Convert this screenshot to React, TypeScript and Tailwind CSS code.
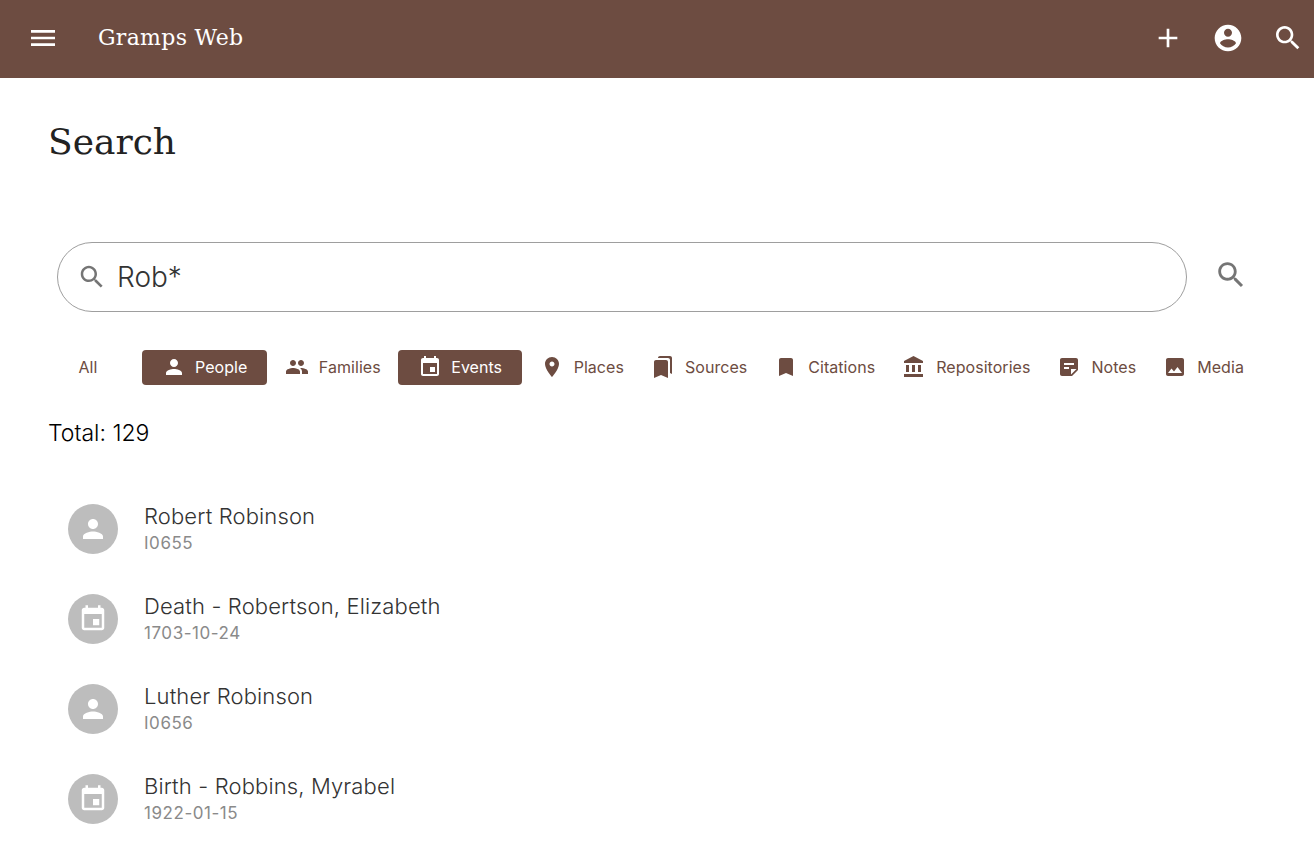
type IconProps = { d: string; className?: string };

const P = {
  menu: "M3 18h18v-2H3v2zm0-5h18v-2H3v2zm0-7v2h18V6H3z",
  plus: "M19 13h-6v6h-2v-6H5v-2h6V5h2v6h6v2z",
  account:
    "M12 2C6.48 2 2 6.48 2 12s4.48 10 10 10 10-4.48 10-10S17.52 2 12 2zm0 3c1.66 0 3 1.34 3 3s-1.34 3-3 3-3-1.34-3-3 1.34-3 3-3zm0 14.2c-2.5 0-4.71-1.28-6-3.22.03-1.99 4-3.08 6-3.08 1.99 0 5.97 1.09 6 3.08-1.29 1.94-3.5 3.22-6 3.22z",
  search:
    "M15.5 14h-.79l-.28-.27C15.41 12.59 16 11.11 16 9.5 16 5.91 13.09 3 9.5 3S3 5.91 3 9.5 5.91 16 9.5 16c1.61 0 3.09-.59 4.23-1.57l.27.28v.79l5 4.99L20.49 19l-4.99-5zm-6 0C7.01 14 5 11.99 5 9.5S7.01 5 9.5 5 14 7.01 14 9.5 11.99 14 9.5 14z",
  person:
    "M12 12c2.21 0 4-1.79 4-4s-1.79-4-4-4-4 1.79-4 4 1.79 4 4 4zm0 2c-2.67 0-8 1.34-8 4v2h16v-2c0-2.66-5.33-4-8-4z",
  people:
    "M16 11c1.66 0 2.99-1.34 2.99-3S17.66 5 16 5c-1.66 0-3 1.34-3 3s1.34 3 3 3zm-8 0c1.66 0 2.99-1.34 2.99-3S9.66 5 8 5C6.34 5 5 6.34 5 8s1.34 3 3 3zm0 2c-2.33 0-7 1.17-7 3.5V19h14v-2.5c0-2.33-4.67-3.5-7-3.5zm8 0c-.29 0-.62.02-.97.05 1.16.84 1.97 1.97 1.97 3.45V19h6v-2.5c0-2.33-4.67-3.5-7-3.5z",
  event:
    "M17 12h-5v5h5v-5zM16 1v2H8V1H6v2H5c-1.11 0-1.99.9-1.99 2L3 19c0 1.1.89 2 2 2h14c1.1 0 2-.9 2-2V5c0-1.1-.9-2-2-2h-1V1h-2zm3 18H5V8h14v11z",
  place:
    "M12 2C8.13 2 5 5.13 5 9c0 5.25 7 13 7 13s7-7.75 7-13c0-3.87-3.13-7-7-7zm0 9.5c-1.38 0-2.5-1.12-2.5-2.5s1.12-2.5 2.5-2.5 2.5 1.12 2.5 2.5-1.12 2.5-2.5 2.5z",
  bookmarks:
    "M19 18l2 1V3c0-1.1-.9-2-2-2H8.99C7.89 1 7 1.9 7 3h10c1.1 0 2 .9 2 2v13zM15 5H5c-1.1 0-2 .9-2 2v16l7-3 7 3V7c0-1.1-.9-2-2-2z",
  bookmark: "M17 3H7c-1.1 0-1.99.9-1.99 2L5 21l7-3 7 3V5c0-1.1-.9-2-2-2z",
  bank: "M4 10v7h3v-7H4zm6 0v7h3v-7h-3zM2 22h19v-3H2v3zm14-12v7h3v-7h-3zm-4.5-9L2 6v2h19V6l-9.5-5z",
  note: "M19 3H4.99C3.89 3 3 3.9 3 5l.01 14c0 1.1.89 2 1.99 2h10l6-6V5c0-1.1-.9-2-2-2zM7 8h10v2H7V8zm5 6H7v-2h5v2zm2 5.5V14h5.5L14 19.5z",
  image:
    "M21 19V5c0-1.1-.9-2-2-2H5c-1.1 0-2 .9-2 2v14c0 1.1.9 2 2 2h14c1.1 0 2-.9 2-2zM8.5 13.5l2.5 3.01L14.5 12l4.5 6H5l3.5-4.5z",
};

function Icon({ d, className }: IconProps) {
  return (
    <svg viewBox="0 0 24 24" fill="currentColor" className={className} aria-hidden>
      <path d={d} />
    </svg>
  );
}

const CHIPS = [
  { label: "People", icon: P.person, active: true },
  { label: "Families", icon: P.people, active: false },
  { label: "Events", icon: P.event, active: true },
  { label: "Places", icon: P.place, active: false },
  { label: "Sources", icon: P.bookmarks, active: false },
  { label: "Citations", icon: P.bookmark, active: false },
  { label: "Repositories", icon: P.bank, active: false },
  { label: "Notes", icon: P.note, active: false },
  { label: "Media", icon: P.image, active: false },
];

const RESULTS = [
  { title: "Robert Robinson", sub: "I0655", icon: P.person },
  { title: "Death - Robertson, Elizabeth", sub: "1703-10-24", icon: P.event },
  { title: "Luther Robinson", sub: "I0656", icon: P.person },
  { title: "Birth - Robbins, Myrabel", sub: "1922-01-15", icon: P.event },
];

export default function App() {
  return (
    <div className="min-h-[843px] bg-white font-['Inter',sans-serif] font-light text-black">
      <header className="flex h-[78px] items-center bg-[#6d4c41] pr-[10px] pb-[2px] pl-[27px] text-white">
        <Icon d={P.menu} className="h-8 w-8" />
        <span className="ml-[39px] pb-[2px] font-['DejaVu_Serif',serif] text-[22px] font-normal tracking-[0.3px]">
          Gramps Web
        </span>
        <div className="ml-auto flex items-center gap-7">
          <Icon d={P.plus} className="h-8 w-8" />
          <Icon d={P.account} className="h-8 w-8" />
          <Icon d={P.search} className="h-8 w-8" />
        </div>
      </header>

      <main className="px-12">
        <h1 className="pt-[39px] font-['DejaVu_Serif',serif] text-[36px] leading-[50px] font-extralight text-[#222]">
          Search
        </h1>

        <div className="mt-[75px] flex items-center pl-[9px]">
          <div className="flex h-[70px] w-[1130px] items-center rounded-full border border-[#9e9e9e] pl-[19px] text-[#757575]">
            <Icon d={P.search} className="h-[30px] w-[30px]" />
            <span className="ml-[10px] text-[28px] text-[#333]">Rob*</span>
          </div>
          <Icon d={P.search} className="mb-[5px] ml-[27px] h-[34px] w-[34px] text-[#757575]" />
        </div>

        <div className="mt-[38px] flex h-[35px] items-center pb-[2px] text-[16px] font-normal tracking-[0.05px] text-[#6d4c41]">
          <div className="mr-[10px] w-[80px] text-center">All</div>
          {CHIPS.map((c) =>
            c.active ? (
              <div
                key={c.label}
                className="mx-[4px] -mb-[2px] flex h-[35px] items-center gap-[9px] rounded bg-[#6d4c41] px-5 pb-[2px] text-white"
              >
                <Icon d={c.icon} className="h-6 w-6" />
                {c.label}
              </div>
            ) : (
              <div key={c.label} className="flex items-center gap-[10px] px-[13.5px]">
                <Icon d={c.icon} className="h-6 w-6" />
                {c.label}
              </div>
            ),
          )}
        </div>

        <p className="mt-[33px] text-[23px] leading-[30px]">Total: 129</p>

        <ul className="mt-[56px]">
          {RESULTS.map((r) => (
            <li key={r.title} className="flex h-[90px] pl-5">
              <div className="flex h-[50px] w-[50px] items-center justify-center rounded-full bg-[#bdbdbd] text-white">
                <Icon d={r.icon} className="h-[30px] w-[30px]" />
              </div>
              <div className="ml-[26px] -mt-[3px]">
                <div className="text-[22px] leading-[30px] tracking-[0.14px] text-[#333]">{r.title}</div>
                <div className="text-[17px] leading-[24px] font-normal tracking-[0.55px] text-[#8a8a8a]">
                  {r.sub}
                </div>
              </div>
            </li>
          ))}
        </ul>
      </main>
    </div>
  );
}
